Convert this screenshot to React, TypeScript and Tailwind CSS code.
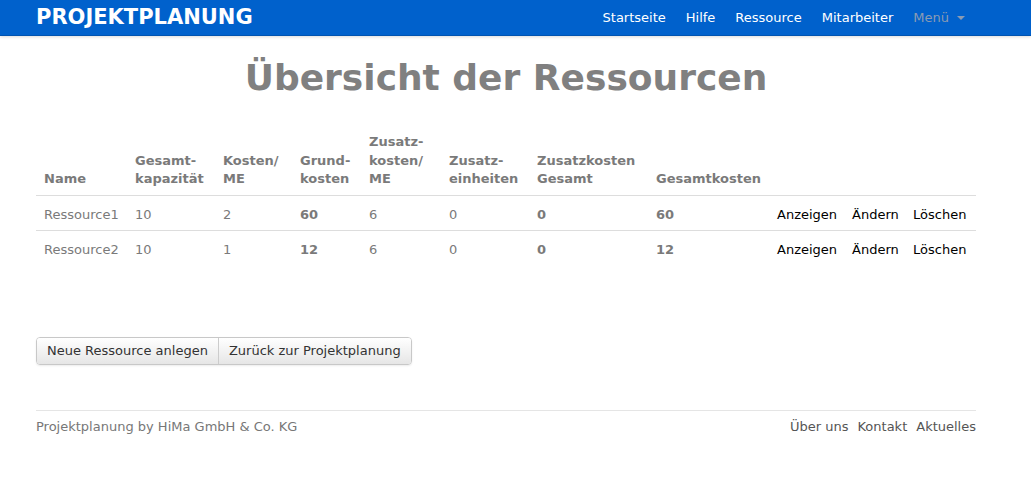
import React from "react";

const font = { fontFamily: '"DejaVu Sans", Verdana, sans-serif' };

const cols = [91, 88, 77, 69, 80, 88, 119, 121, 75, 61, 71];

const headers: string[][] = [
  ["Name"],
  ["Gesamt-", "kapazität"],
  ["Kosten/", "ME"],
  ["Grund-", "kosten"],
  ["Zusatz-", "kosten/", "ME"],
  ["Zusatz-", "einheiten"],
  ["Zusatzkosten", "Gesamt"],
  ["Gesamtkosten"],
  [],
  [],
  [],
];

const rows = [
  ["Ressource1", "10", "2", "60", "6", "0", "0", "60"],
  ["Ressource2", "10", "1", "12", "6", "0", "0", "12"],
];

const boldIdx = [3, 6, 7];

export default function App() {
  return (
    <div className="min-h-[485px] bg-white text-[13px]" style={font}>
      <div className="h-9 bg-[#0061cc] border-b border-[#0053b0] shadow-[0_1px_3px_rgba(0,0,0,0.15)]">
        <div className="w-[940px] ml-[36px] flex items-center h-full">
          <div className="text-white font-bold text-[21px] leading-none">PROJEKTPLANUNG</div>
          <div className="ml-auto flex items-center text-white text-[13px] mr-[1px]">
            <span className="px-[10px]">Startseite</span>
            <span className="px-[10px]">Hilfe</span>
            <span className="px-[10px]">Ressource</span>
            <span className="px-[10px]">Mitarbeiter</span>
            <span className="px-[10px] text-[#8a9bb3] flex items-center">
              Menü
              <span className="ml-[8px] inline-block w-0 h-0 border-l-[4px] border-r-[4px] border-t-[4px] border-l-transparent border-r-transparent border-t-[#8a9bb3]" />
            </span>
          </div>
        </div>
      </div>

      <div className="w-[940px] ml-[36px]">
        <h1 className="text-center text-[#808080] font-bold text-[36px] leading-[48px] mt-[18px] mb-[31px]">
          Übersicht der Ressourcen
        </h1>

        <table className="w-[940px] border-collapse table-fixed">
          <colgroup>
            {cols.map((w, i) => (
              <col key={i} style={{ width: w }} />
            ))}
          </colgroup>
          <thead>
            <tr>
              {headers.map((h, i) => (
                <th
                  key={i}
                  className="text-left align-bottom font-bold text-[#7a7a7a] px-2 pt-0 pb-[6px] leading-[18.5px] border-b border-[#dddddd]"
                >
                  {h.map((l, j) => (
                    <div key={j} className="whitespace-nowrap">{l}</div>
                  ))}
                </th>
              ))}
            </tr>
          </thead>
          <tbody>
            {rows.map((r, ri) => {
              const b = ri === rows.length - 1 ? "border-transparent" : "border-[#dddddd]";
              return (
                <tr key={ri}>
                  {r.map((c, ci) => (
                    <td
                      key={ci}
                      className={`px-2 pt-[10px] pb-[6px] align-top text-[#7a7a7a] leading-[18px] border-b ${b} ${boldIdx.includes(ci) ? "font-bold" : ""}`}
                    >
                      {c}
                    </td>
                  ))}
                  <td className={`px-2 pt-[10px] pb-[6px] leading-[18px] text-black whitespace-nowrap border-b ${b}`}>Anzeigen</td>
                  <td className={`px-2 pt-[10px] pb-[6px] leading-[18px] text-black whitespace-nowrap border-b ${b}`}>Ändern</td>
                  <td className={`px-2 pt-[10px] pb-[6px] leading-[18px] text-black whitespace-nowrap border-b ${b}`}>Löschen</td>
                </tr>
              );
            })}
          </tbody>
        </table>

        <div className="mt-[71px] flex">
          <div className="inline-flex rounded-[4px] border border-[#c8c8c8] shadow-[0_1px_2px_rgba(0,0,0,0.08)] overflow-hidden">
            <div className="h-[26px] px-[10px] flex items-center text-[#333] bg-gradient-to-b from-white to-[#e6e6e6] border-r border-[#cccccc]">
              Neue Ressource anlegen
            </div>
            <div className="h-[26px] px-[10px] flex items-center text-[#333] bg-gradient-to-b from-white to-[#e6e6e6]">
              Zurück zur Projektplanung
            </div>
          </div>
        </div>

        <div className="mt-[45px] border-t border-[#e5e5e5] pt-[6px] flex items-center">
          <span className="text-[#777]">Projektplanung by HiMa GmbH &amp; Co. KG</span>
          <div className="ml-auto flex gap-[9px] text-[#555]">
            <span>Über uns</span>
            <span>Kontakt</span>
            <span>Aktuelles</span>
          </div>
        </div>
      </div>
    </div>
  );
}
